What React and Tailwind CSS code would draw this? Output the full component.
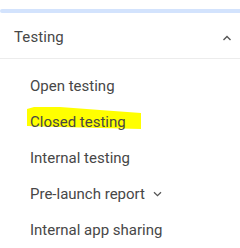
import React from "react";

const items = ["Open testing", "Closed testing", "Internal testing", "Pre-launch report", "Internal app sharing"];

export default function App() {
  return (
    <div className="w-[240px] h-[248px] bg-white overflow-hidden relative" style={{ fontFamily: "Roboto, 'Noto Sans', sans-serif" }}>
      <div className="h-[9px]" />
      <div className="h-[4px] bg-[#d3e3fd] rounded-l-full" />
      <div className="h-[46px] flex items-center justify-between pl-[14px] pr-[7px] pt-[4px] border-b border-[#ececec]">
        <span className="text-[15px] text-[#474747] tracking-[0.1px]">Testing</span>
        <svg width="10" height="6" viewBox="0 0 10 6" className="mr-[1px]">
          <path d="M1.5 5 L5 1.6 L8.5 5" fill="none" stroke="#555" strokeWidth="1.4" />
        </svg>
      </div>
      <svg className="absolute left-0 top-0 pointer-events-none" width="240" height="248">
        <polygon points="27,109 34,107 60,107 100,110 141,113 141,129 100,128 60,127 27,126" fill="#ffff00" />
      </svg>
      <div className="relative pt-[9px] flex flex-col">
        {items.map((t, i) => (
          <div key={t} className="h-[36px] flex items-center pl-[30px] text-[15px] text-[#474747] gap-[8px]">
            <span>{t}</span>
            {i === 3 && (
              <svg width="9" height="6" viewBox="0 0 9 6">
                <path d="M1 1.3 L4.5 4.6 L8 1.3" fill="none" stroke="#555" strokeWidth="1.3" />
              </svg>
            )}
          </div>
        ))}
      </div>
    </div>
  );
}
